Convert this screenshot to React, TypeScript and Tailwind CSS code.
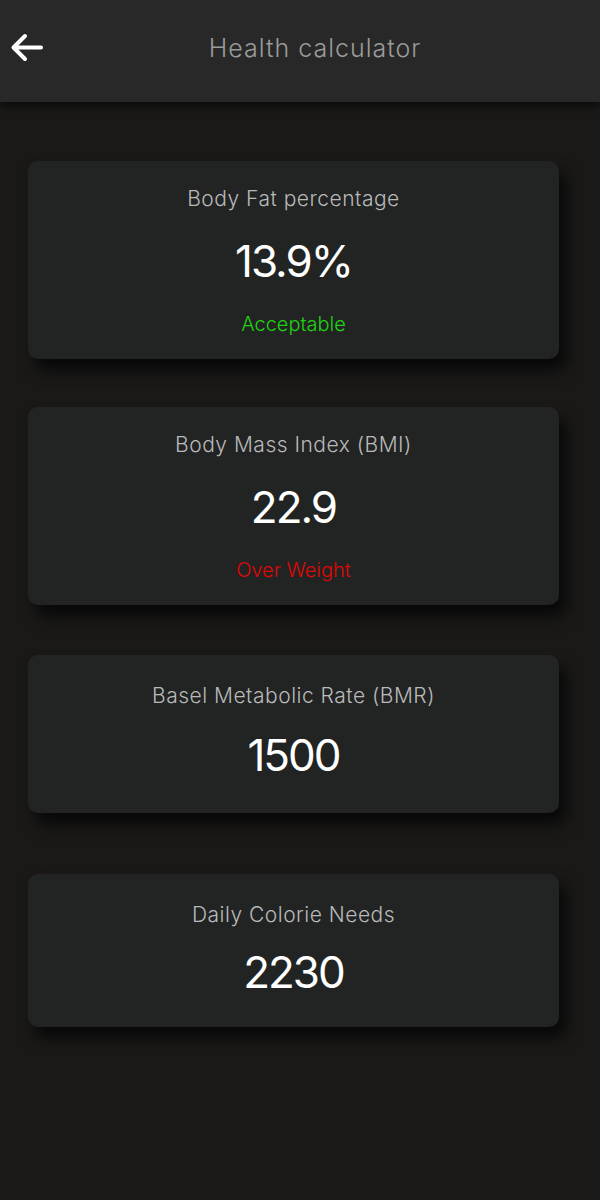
import React from 'react';

interface StatCardProps {
  title: string;
  value: string;
  status?: string;
  statusColor?: string;
  className?: string;
  valueGap: string;
}

const StatCard: React.FC<StatCardProps> = ({ title, value, status, statusColor, className, valueGap }) => {
  return (
    <div
      className={`ml-[28px] mr-[41px] shrink-0 rounded-[10px] bg-[#222424] flex flex-col items-center shadow-[7px_11px_15px_rgba(0,0,0,0.7)] ${className ?? ''}`}
    >
      <div className="text-[21px] leading-[28px] font-light text-[#b9b9b9] tracking-[0.5px]">{title}</div>
      <div className={`${valueGap} text-[44px] leading-[48px] font-normal text-white tracking-[-2px]`}>{value}</div>
      {status && (
        <div className={`mt-[27px] text-[20px] leading-[24px] font-light ${statusColor}`}>{status}</div>
      )}
    </div>
  );
};

export default function App() {
  return (
    <div
      className="w-[600px] h-[1200px] bg-[#1a1918] flex flex-col"
      style={{ fontFamily: '"Inter", "Liberation Sans", sans-serif' }}
    >
      {/* Header */}
      <div className="relative z-10 h-[102px] shrink-0 bg-[#282828] flex items-start shadow-[0_4px_8px_rgba(0,0,0,0.6)]">
        <button className="ml-[10px] mt-[31px] w-[34px] h-[34px] flex items-center justify-center">
          <svg width="34" height="34" viewBox="0 0 34 34" fill="none">
            <path
              d="M31 16.5H4M15 5L3.5 16.5L15 28"
              stroke="white"
              strokeWidth="4"
              strokeLinecap="round"
              strokeLinejoin="round"
            />
          </svg>
        </button>
        <div className="flex-1 text-center mt-[32px] pr-[14px] text-[25px] leading-[32px] font-light tracking-[1px] text-[#9b9b9b]">
          Health calculator
        </div>
      </div>

      {/* Cards */}
      <StatCard
        className="mt-[59px] h-[198px] pt-[24px]"
        valueGap="mt-[24px]"
        title="Body Fat percentage"
        value="13.9%"
        status="Acceptable"
        statusColor="text-[#1fd20f]"
      />
      <StatCard
        className="mt-[48px] h-[198px] pt-[24px]"
        valueGap="mt-[24px]"
        title="Body Mass Index (BMI)"
        value="22.9"
        status="Over Weight"
        statusColor="text-[#e00606]"
      />
      <StatCard
        className="mt-[50px] h-[158px] pt-[27px]"
        valueGap="mt-[21px]"
        title="Basel Metabolic Rate (BMR)"
        value="1500"
      />
      <StatCard
        className="mt-[61px] h-[153px] pt-[27px]"
        valueGap="mt-[19px]"
        title="Daily Colorie Needs"
        value="2230"
      />
    </div>
  );
}
